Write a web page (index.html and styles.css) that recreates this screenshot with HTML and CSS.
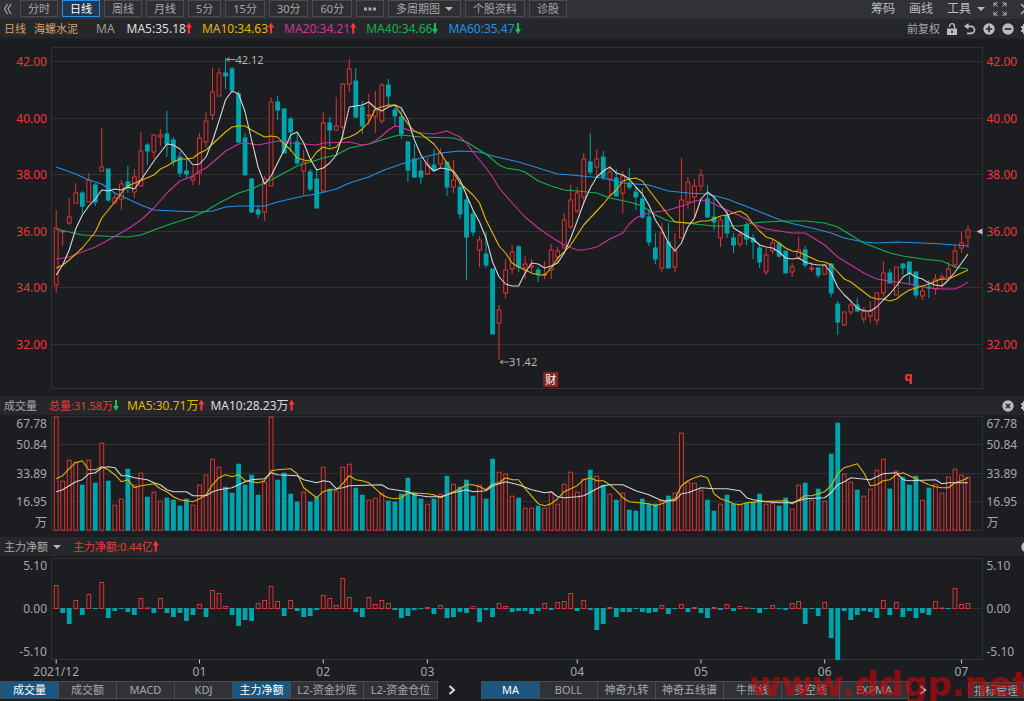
FILE: index.html
```html
<!DOCTYPE html>
<html lang="zh-CN">
<head>
<meta charset="utf-8">
<meta name="viewport" content="width=device-width, initial-scale=1">
<title>海螺水泥 日线</title>
<link rel="stylesheet" href="styles.css">
</head>
<body>
<main class="terminal">
  <nav class="toolbar" aria-label="周期">
    <button class="collapse" aria-label="收起"><svg width="9" height="12" viewBox="0 0 9 12"><path d="M4.5 1 1.5 6l3 5M8 1 5 6l3 5" fill="none" stroke="currentColor" stroke-width="1.2"/></svg></button>
    <div class="periods">
      <button class="period">分时</button>
      <button class="period active">日线</button>
      <button class="period">周线</button>
      <button class="period">月线</button>
      <button class="period">5分</button>
      <button class="period">15分</button>
      <button class="period">30分</button>
      <button class="period">60分</button>
      <button class="period" aria-label="更多"><svg width="12" height="4" viewBox="0 0 12 4"><path d="M0 .5h3v3H0zM4.500.5h3v3h-3zM9 .5h3v3H9z" fill="currentColor"/></svg></button>
      <button class="period">多周期图<i class="caret"></i></button>
      <button class="period">个股资料</button>
      <button class="period">诊股</button>
    </div>
    <div class="tools">
      <button class="tool">筹码</button>
      <button class="tool">画线</button>
      <button class="tool menu">工具<i class="caret"></i></button>
      <button class="tool" aria-label="全屏"><svg width="14" height="14" viewBox="0 0 14 14"><path d="M1 4.500V1h3.500M1 1l3.500 3.500M9.500 1H13v3.500M13 1 9.500 4.500M1 9.500V13h3.500M1 13l3.500-3.500M13 9.500V13H9.500M13 13 9.500 9.500" fill="none" stroke="currentColor"/></svg></button>
      <button class="tool edge" aria-label="关闭"><svg width="3" height="12" viewBox="0 0 3 12"><path d="M0 1l5 5-5 5" fill="none" stroke="currentColor" stroke-width="1.500"/></svg></button>
    </div>
  </nav>

  <header class="infobar">
    <span class="stock">日线</span>
    <span class="stock name">海螺水泥</span>
    <span class="ma label">MA</span>
    <span class="ma white">MA5:35.18<b class="up"></b></span>
    <span class="ma yellow">MA10:34.63<b class="up"></b></span>
    <span class="ma magenta">MA20:34.21<b class="up"></b></span>
    <span class="ma green">MA40:34.66<b class="down"></b></span>
    <span class="ma blue">MA60:35.47<b class="down green-arrow"></b></span>
    <div class="infotools">
      <button class="tool small">前复权</button>
      <button class="tool" aria-label="锁定"><svg width="10" height="12" viewBox="0 0 10 12"><path d="M2.500 4V3a2.500 2.300 0 0 1 5 0v2.500" fill="none" stroke="currentColor" stroke-width="1.300"/><path d="M0 5.500h10V12H0zM4.200 7.500v2.500h1.600V7.500z" fill="currentColor" fill-rule="evenodd"/></svg></button>
      <button class="tool" aria-label="撤销"><svg width="12" height="12" viewBox="0 0 12 12"><path d="M2 3.300h5a3.400 3.400 0 0 1 0 7H3" fill="none" stroke="currentColor" stroke-width="1.700"/><path d="M0 3.300 4.500 0v6.600z" fill="currentColor"/></svg></button>
      <button class="tool" aria-label="放大"><svg width="12" height="12" viewBox="0 0 12 12"><circle cx="6" cy="6" r="5.700" fill="currentColor"/><path d="M2.800 6h6.400M6 2.800v6.400" stroke="#27282b" stroke-width="1.700"/></svg></button>
      <button class="tool" aria-label="缩小"><svg width="12" height="12" viewBox="0 0 12 12"><circle cx="6" cy="6" r="5.700" fill="currentColor"/><path d="M2.800 6h6.400" stroke="#27282b" stroke-width="1.700"/></svg></button>
      <button class="tool edge" aria-label="设置"><svg width="3" height="12" viewBox="0 0 3 12"><path d="M3 1H2v2H0v2h1v2H0v2h2v2h1z" fill="currentColor"/></svg></button>
    </div>
  </header>

  <section class="pane price"><svg id="price" role="img" aria-label="K线图"></svg></section>

  <header class="panebar">
    <span class="title">成交量</span>
    <span class="red">总量:31.58万<b class="down"></b></span>
    <span class="ma yellow">MA5:30.71万<b class="up"></b></span>
    <span class="ma white">MA10:28.23万<b class="up"></b></span>
    <div class="infotools">
      <button class="tool" aria-label="关闭成交量"><svg width="12" height="12" viewBox="0 0 12 12"><circle cx="6" cy="6" r="5.700" fill="currentColor"/><path d="m3.800 3.800 4.400 4.400M8.200 3.800 3.800 8.200" stroke="#27282b" stroke-width="1.600"/></svg></button>
      <button class="tool edge" aria-label="设置成交量"><svg width="3" height="12" viewBox="0 0 3 12"><path d="M3 1H2v2H0v2h1v2H0v2h2v2h1z" fill="currentColor"/></svg></button>
    </div>
  </header>
  <section class="pane volume"><svg id="volume" role="img" aria-label="成交量图"></svg></section>

  <header class="panebar">
    <button class="title">主力净额<i class="caret"></i></button>
    <span class="red">主力净额:0.44亿<b class="up"></b></span>
    <div class="infotools">
      <button class="tool edge" aria-label="关闭主力净额"><svg width="3" height="12" viewBox="0 0 3 12"><circle cx="6" cy="6" r="5.700" fill="currentColor"/></svg></button>
    </div>
  </header>
  <section class="pane flow"><svg id="flow" role="img" aria-label="主力净额图"></svg></section>

  <footer class="indicators">
    <div class="tabs">
      <button class="tab active">成交量</button>
      <button class="tab">成交额</button>
      <button class="tab">MACD</button>
      <button class="tab">KDJ</button>
      <button class="tab active">主力净额</button>
      <button class="tab wide">L2-资金抄底</button>
      <button class="tab wide">L2-资金仓位</button>
    </div>
    <button class="next" aria-label="更多副图指标"><svg width="8" height="10" viewBox="0 0 8 10"><path d="m1.500 1 4.500 4-4.500 4" fill="none" stroke="currentColor" stroke-width="2"/></svg></button>
    <div class="tabs">
      <button class="tab active">MA</button>
      <button class="tab">BOLL</button>
      <button class="tab">神奇九转</button>
      <button class="tab mid">神奇五线谱</button>
      <button class="tab">牛熊线</button>
      <button class="tab">多空线</button>
      <button class="tab mid">EXPMA</button>
    </div>
    <button class="next" aria-label="更多主图指标"><svg width="8" height="10" viewBox="0 0 8 10"><path d="m1.500 1 4.500 4-4.500 4" fill="none" stroke="currentColor" stroke-width="2"/></svg></button>
    <button class="tab manage">指标管理</button>
    <div class="watermark">www.ddgp.net</div>
  </footer>
</main>
<script src="chart.js"></script>
</body>
</html>
```

FILE: styles.css
```css
* { box-sizing: border-box; }

body {
  margin: 0;
  background: #1c1d20;
  color: #a6a7a9;
  font-family: "Noto Sans", "Noto Sans CJK SC", sans-serif;
  font-size: 11px;
  line-height: 16px;
}

button {
  margin: 0;
  padding: 0;
  border: 0;
  background: none;
  color: inherit;
  font: inherit;
  white-space: nowrap;
  cursor: pointer;
}

svg { display: block; }

.terminal {
  display: flex;
  flex-direction: column;
  min-height: 100vh;
  overflow: hidden;
}

.toolbar {
  display: flex;
  align-items: center;
  height: 19px;
  padding: 0 0 2px 3px;
  background: #313236;
}

.collapse { width: 17px; }

.periods { display: flex; gap: 4px; }

.period {
  display: flex;
  align-items: center;
  height: 17px;
  padding: 0 7px;
  border: 1px solid #4a4b4f;
  background: #2e2f33;
}

.period.active {
  border-color: #1e90f0;
  background: #213a52;
  color: #fff;
}

.caret {
  width: 0;
  margin-left: 6px;
  border: 4px solid transparent;
  border-top-color: #b5b6b8;
  border-bottom-width: 0;
}
.period .caret { margin-left: 5px; }

.tools {
  display: flex;
  align-items: center;
  gap: 14px;
  margin-left: auto;
  font-size: 12px;
}

.tool { display: flex; align-items: center; color: #bbbcbe; }
.tool.small { font-size: 11px; color: #a6a7a9; }
.menu { margin-right: -6px; }

.infobar,
.panebar {
  display: flex;
  align-items: center;
  height: 19px;
  padding-left: 4px;
  background: #26272a;
  white-space: nowrap;
}

.infobar { gap: 10px; height: 20px; border-bottom: 1px solid #202124; }
.stock { color: #d9a066; }
.name { margin-left: -2px; }
.ma { font-size: 12px; }
.label { margin: 0 2px 0 8px; color: #98999b; }

.white { color: #dcdcdc; }
.yellow { color: #e0b800; }
.magenta { color: #d030a0; }
.green { color: #14b24c; }
.blue { color: #2090e8; }
.red { color: #e83a3a; }

/* Trend arrows: a 2px stem and a triangular head */
.up,
.down {
  display: inline-block;
  width: 6px;
  height: 11px;
  vertical-align: -1px;
  clip-path: polygon(50% 0, 100% 45%, 67% 45%, 67% 100%, 33% 100%, 33% 45%, 0 45%);
  background: #ff3535;
}
.down { transform: rotate(180deg); background: #10c850; }

.infotools {
  display: flex;
  align-items: center;
  gap: 7px;
  margin-left: auto;
}

.panebar { gap: 6px; }
.title { display: flex; align-items: center; }
.title + .red { margin: 0 2px 0 6px; }
.title .caret { margin-left: 5px; }

.pane { position: relative; min-height: 0; }
.pane svg { position: absolute; width: 100%; height: 100%; }
.price { flex: 357 0 357px; }
.volume { flex: 122 0 122px; }
.flow { flex: 124 0 124px; }

.axis { fill: #a6a7a9; font-size: 12px; }
.axis.hot { fill: #ef3737; }
.note { fill: #b4b4b4; font-size: 11px; }
.badge { fill: #fff; font-size: 11px; }
.quarter { fill: #ff3434; font-size: 13px; font-weight: 700; }

.indicators {
  position: relative;
  display: flex;
  align-items: center;
  height: 21px;
  padding-bottom: 1px;
}

.tabs { display: flex; border: 1px solid #4a4b4f; }

.tab {
  width: 58px;
  height: 16px;
  border-right: 1px solid #4a4b4f;
  background: #313236;
  text-align: center;
}
.tab:last-child { border-right: 0; }
.tab.wide { width: 73px; }
.tab.mid { width: 68px; }
.tab.active { background: #1a5680; color: #fff; }

.next { margin: 0 25px 0 10px; color: #d8d8d8; }

.tab.manage {
  width: 56px;
  margin-left: auto;
  border: 1px solid #4a4b4f;
}

.watermark {
  position: absolute;
  right: -4px;
  bottom: 0;
  color: rgba(205, 5, 10, 0.6);
  font: 700 34px/34px "DejaVu Sans", sans-serif;
  pointer-events: none;
}
```

FILE: chart.js
```javascript
// Each candle: direction (r rise, g fall), high, body top, body bottom, low.
// Levels count downwards; LEVEL_42 is the level of 42.00, two yuan take 56.5.
const candles = `r210,228,285,293 r230,231,232,246 r198,217,223,225 r183,193,203,203 g191,193,206,213 r173,180,202,202
g183,185,202,206 r128,167,171,171 g169,169,200,202 r192,198,203,203 r180,184,199,210 g166,182,188,193 r169,177,192,198
r132,151,186,186 g143,145,151,165 r134,135,152,159 r129,135,137,146 g111,134,144,157 g137,140,161,166 g152,157,173,177
g160,171,174,178 r167,177,180,185 r133,138,173,185 r112,121,142,147 r68,92,115,120 r68,73,96,96 g58,73,76,89
g67,69,90,93 g91,94,142,143 g133,138,175,175 g178,179,212,213 g206,210,214,218 r176,179,212,221 r97,102,186,186
g96,102,110,120 g108,109,153,153 g117,119,132,152 g133,142,163,165 r150,162,171,195 g169,172,189,191 g170,179,208,208
r112,123,191,192 g117,123,130,147 r97,126,130,131 r83,84,127,138 r59,69,84,92 g68,81,117,118 g101,107,126,134
r94,115,116,125 r91,110,116,133 r83,85,121,124 g79,85,96,107 g107,110,116,126 g109,117,134,139 g141,142,170,182
g144,159,177,178 g160,171,177,184 r158,164,174,175 g149,165,170,172 r148,153,164,168 g162,162,187,196 r160,180,187,193
g182,187,214,219 g195,200,237,280 g210,214,232,236 r236,240,250,267 g232,254,265,268 g269,269,334,334 r305,310,323,360
r259,270,293,298 r245,252,269,274 g245,247,267,272 r256,264,268,279 r259,266,267,272 g267,270,274,282 r261,274,275,279
r244,250,270,279 r247,251,257,263 r213,220,248,248 r185,200,227,229 r187,193,211,213 r153,159,197,203 g133,162,172,175
r149,159,167,177 g151,157,177,180 r168,172,179,196 g169,178,196,196 r171,176,193,213 g168,183,187,190 g187,192,197,210
g188,199,217,219 g209,217,242,246 g233,248,259,264 r223,233,268,272 g223,242,268,268 r233,251,267,272 r158,200,238,238
r177,182,202,209 r179,186,197,218 r169,175,186,191 g185,199,217,217 g197,217,222,230 r217,220,238,247 g210,215,233,238
g233,238,245,253 r232,235,244,247 g222,225,239,245 g234,238,242,259 g244,248,262,268 r248,255,272,275 r239,243,251,254
g242,244,256,258 g251,251,273,273 r263,267,272,277 r237,250,257,260 g246,250,265,268 r262,268,269,272 g267,268,275,278
r264,265,274,274 g263,264,293,297 g301,304,322,335 r312,312,325,326 r301,305,312,315 g298,305,311,312 r307,310,319,323
r301,311,316,323 r293,293,320,325 r261,273,293,297 g269,273,283,283 r267,267,295,295 g263,264,268,275 g262,262,273,285
g272,272,295,298 r287,291,296,300 g280,287,288,298 r274,279,289,295 r274,277,279,287 r262,269,277,278 r245,251,265,268
r232,243,248,253 r225,230,237,248`.split(/\s+/).map(s => [s[0], ...s.slice(1).split(',').map(Number)]);

const volumes = [114,50,71,69,46,71,48,88,50,26,32,62,46,58,34,39,30,33,31,25,32,26,46,56,72,64,44,38,67,46,56,36,49,114,51,58,37,29,39,29,34,64,42,40,64,67,43,36,31,33,38,30,29,37,53,38,32,27,32,37,55,47,44,51,35,46,32,72,59,57,35,33,23,23,25,23,39,27,47,59,39,52,61,55,46,37,31,38,21,20,32,27,27,31,35,38,98,49,48,41,31,20,27,36,27,27,28,29,37,27,28,25,33,22,46,48,31,42,30,77,108,57,49,41,35,42,61,72,42,60,54,46,55,31,43,47,38,54,62,56,54];

const flows = [23,-5,-16,8,-7,14,-1,26,-10,-3,-1,-4,-7,10,.5,-5,10,-5,-9,-5,-13,-7,4,-9,18,15,2,-7,-18,-12,-13,5,8,22,7,-8,8,-3,-9,-8,-2,13,10,3,30,11,-4,-9,11,4,8,5,-2,-10,-8,-2,-1,1,-6,3,-10,-9,-4,-5,2,-14,-2,-9,5,2,-4,-3,-3,-6,-3,5,-2,6,7,15,-3,8,-2,-22,-16,1,-9,-4,-4,-1,-4,-5,-4,3,-6,-1,4,-4,1,-5,-10,1,-2,4,-3,2,.5,-1,-5,-1,3,-1,-2,5,7,-16,-1,-8,6,-30,-52,-3,-12,-7,-3,-4,-10,8,-7,6,-9,-3,-10,-5,-7,7,.5,-1,20,4,5];

// Line nodes are "index:value" pairs; a bare value belongs to the next index.
const lines = s => {
  let i = -1;
  return s.trim().split(/\s+/).map(t => {
    const p = t.split(':');
    i = p.length > 1 ? +p[0] : i + 1;
    return [i, +p[p.length - 1]];
  });
};

const priceLines = [
  ['#2090e8', lines('167 3:174 5:180 7:184 9:193 11:199 13:205 15:210 18:211 22:212 24:211 26:207 28:206 32:206 34:202 38:196 40:194 43:189 45:183 48:177 50:171 53:164 56:158 59:153 62:151 65:152 67:156 69:159 71:162 74:168 77:174 79:175 84:178 87:183 91:185 94:191 97:193 100:194 103:199 107:209 110:217 112:222 116:228 119:233 121:238 124:242 126:243 129:242 133:243 136:244 138:245 140:246')],
  ['#14b24c', lines('229 2:232 4:235 7:236 11:237 13:235 15:230 18:223 21:217 23:211 25:203 28:193 30:189 33:180 35:173 37:166 39:162 41:158 43:155 45:148 48:144 50:140 52:136 53:135 56:137 61:138 63:142 64:146 66:154 68:165 69:168 71:170 72:172 74:181 76:186 78:190 80:191 83:193 85:198 88:202 90:206 92:215 94:221 98:224 101:226 105:226 107:223 109:222 112:221 115:221 118:223 120:227 122:235 124:243 126:248 128:253 130:256 133:259 136:261 138:267 140:269')],
  ['#d030a0', lines('259 2:257 4:252 6:247 8:240 11:229 13:220 15:208 17:193 19:181 21:176 22:171 23:168 25:157 26:151 28:144 29:143 31:145 34:141 36:143 38:144 40:145 41:143 45:142 47:145 48:144 49:141 50:136 51:130 52:126 53:127 54:130 56:133 58:134 60:131 62:137 63:143 64:152 66:168 67:177 68:188 70:203 72:217 74:228 76:237 78:245 80:250 81:250 83:247 85:239 87:233 88:224 89:218 90:215 91:213 94:210 95:208 97:204 98:201 99:200 100:201 102:207 104:213 106:219 107:224 109:229 113:233 115:233 116:237 118:245 120:257 122:265 124:273 126:279 128:281 132:285 134:288 136:289 138:289 139:286 140:282')],
  ['#e0b800', lines('268 265 260 4:248 6:232 218 210 202 193 186 15:175 169 166 162 159 159 158 153 150 144 138 132 127 126 126 130 32:137 136 137 144 150 158 160 161 152 147 149 147 139 137 134 129 122 109 107 105 105 115 124 131 134 139 144 153 163 173 183 189 195 203 220 233 246 253 263 267 270 273 275 275 268 258 252 245 235 225 84:204 196 190 181 179 178 181 190 93:207 215 222 97:223 223 221 221 219 216 215 213 211 215 224 231 237 239 243 248 251 252 255 258 261 262 265 272 279 282 287 292 297 299 299 301 299 294 290 288 286 284 281 279 279 276 273 270')],
  ['#d6d6d6', lines('275 265 250 229 215 206 199 190 191 189 190 187 189 180 15:161 17:144 145 149 157 165 164 157 141 121 100 91 94 112 140 167 184 176 35:150 135 132 143 159 170 168 163 155 135 107 106 105 102 108 111 107 105 108 120 140 155 165 171 168 169 171 180 195 210 222 238 262 277 284 286 286 273 263 264 268 266 263 253 238 221 203 188 177 171 167 173 175 179 187 194 205 220 230 243 251 243 227 218 199 192 197 205 213 228 232 236 239 245 247 248 252 258 259 258 262 264 265 265 273 287 295 301 308 311 311 307 300 294 286 277 273 277 279 283 285 286 280 272 263 254')]
];

const volumeLines = [
  ['#e0b800', lines('52 55 62 68 70 61 61 64 61 56 49 51 43 45 46 47 42 39 34 31 30 29 32 36 46 53 56 54 56 50 49 48 50 60 61 36:62 57 43 38 33 39 41 41 47 55 51 50 48 42 36 33 32 33 38 57:37 36 33 36 39 42 46 46 44 41 47 48 53 51 51 42 74:27 25 27 32 39 42 45 51 53 50 50 46 40 33 29 91:27 25 27 30 32 45 50 53 55 53 37 32 30 27 26 28 108:29 112:30 27 31 35 35 37 39 45 57 63 65 67 58 45 46 50 51 56 58 55 52 49 46 44 43 43 48 50 53')],
  ['#d6d6d6', lines('39 41 3:49 51 57 58 63 64 63 55 55 53 14:51 48 46 41 39 20:39 35 23:35 39 41 27:43 46 49 51 32:52 58 56 37:55 51 40:48 50 49 42 43 45 50:46 42 53:40 39 36 57:34 59:34 61:38 63:41 39 66:40 45 69:49 71:46 73:41 75:38 39 34 33 80:34 35 83:42 45 46 87:46 43 40 91:36 93:30 95:30 37 38 99:43 101:42 103:42 105:40 33 31 109:29 111:28 113:28 115:32 118:33 38 46 49 53 125:51 54 57 129:58 51 50 135:51 47 48 140:48')]
];

const RISE = '#dc3535', FALL = '#00a4ac', GRID = '#303134';
const LEFT = 51.5, RIGHT = 42, PAD_START = 4.7, PAD_END = 14.5;
const COUNT = candles.length;

function painter(id) {
  const svg = document.getElementById(id);
  svg.replaceChildren();
  const width = svg.clientWidth, height = svg.clientHeight, right = width - RIGHT + .5;
  const step = (right - LEFT - PAD_START - PAD_END) / (COUNT - 1);
  const add = (tag, attrs, text) => {
    const el = document.createElementNS('http://www.w3.org/2000/svg', tag);
    for (const k in attrs) el.setAttribute(k, attrs[k]);
    if (text) el.textContent = text;
    svg.append(el);
  };
  return {
    width, height, right, step, add,
    x: i => LEFT + PAD_START + i * step,
    text: (x, y, cls, text, anchor = 'start') => add('text', { x, y, class: cls, 'text-anchor': anchor }, text),
    rule: (x1, y1, x2, y2, stroke = GRID) => add('line', { x1, y1, x2, y2, stroke }),
    axis(y, label, hot) {
      const cls = hot ? 'axis hot' : 'axis';
      this.text(47, y + 4, cls, label, 'end');
      this.text(right + 4, y + 4, cls, label);
    },
    frame(top, bottom) {
      add('rect', { x: LEFT, y: top, width: right - LEFT, height: bottom - top, fill: 'none', stroke: GRID });
    },
    bar(i, top, bottom, rise, half) {
      const c = this.x(i), h = bottom - top;
      if (rise && h > 2) add('rect', { x: c - half + .5, y: top + .5, width: 2 * half - 1, height: h - 1, fill: '#1c1d20', stroke: RISE });
      else add('rect', { x: c - half, y: top, width: 2 * half, height: Math.max(1, h), fill: rise ? RISE : FALL });
    },
    line(color, nodes, y) {
      add('polyline', { points: nodes.map(([i, v]) => this.x(i).toFixed(1) + ',' + y(v).toFixed(1)).join(' '), fill: 'none', stroke: color, 'stroke-width': 1.1, 'stroke-linejoin': 'round' });
    }
  };
}

function drawPrice() {
  const p = painter('price'), k = p.height / 357, LEVEL_42 = 61.8;
  const y = v => (v - 39) * k;
  p.frame(8.5 * k, 349.5 * k);
  for (let n = 0; n < 6; n++) {
    const level = Math.floor(y(LEVEL_42 + n * 56.5)) + .5;
    p.rule(LEFT, level, p.right, level);
    p.axis(level, (42 - 2 * n).toFixed(2), true);
  }
  candles.forEach(([dir, high, top, bottom, low], i) => {
    const color = dir === 'r' ? RISE : FALL;
    p.rule(p.x(i), y(high), p.x(i), y(low), color);
    p.bar(i, y(top) - .5, y(bottom) + .5, dir === 'r', 2.4);
  });
  priceLines.forEach(([color, nodes]) => p.line(color, nodes, y));

  const arrow = (x, level) => p.add('path', { d: `M${x + 9} ${level}H${x}m3-2-3 2 3 2`, fill: 'none', stroke: '#a0a0a0' });
  arrow(p.x(26) + 1, y(59.5));
  p.text(p.x(26) + 10, y(59.5) + 4, 'note', '42.12');
  arrow(p.x(68) + 1, y(362));
  p.text(p.x(68) + 10, y(362) + 4, 'note', '31.42');
  p.add('rect', { x: p.x(76) - 8, y: y(379) - 7, width: 15, height: 15, rx: 1, fill: '#842626' });
  p.text(p.x(76) - .5, y(379) + 4.5, 'badge', '财', 'middle');
  p.text(p.x(131) - 1, y(381), 'quarter', 'q', 'middle');
  p.add('path', { d: `M${p.right - 6} ${y(231.5)}l6-3v6z`, fill: '#c0c0c0' });
}

function drawVolume() {
  const p = painter('volume'), k = p.height / 122, base = 115.7 * k;
  const y = h => base - h * k;
  p.frame(1.5 * k, 115.5 * k);
  [86.3, 57.3, 29.2].forEach(h => p.rule(LEFT, Math.floor(y(h)) + .5, p.right, Math.floor(y(h)) + .5));
  p.axis(9 * k, '67.78');
  p.axis(30 * k, '50.84');
  p.axis(59 * k, '33.89');
  p.axis(87 * k, '16.95');
  p.axis(108 * k, '万');
  volumes.forEach((v, i) => p.bar(i, y(v), base, candles[i][0] === 'r', 2.4));
  volumeLines.forEach(([color, nodes]) => p.line(color, nodes, y));
}

function drawFlow() {
  const p = painter('flow'), k = p.height / 124, zero = 52 * k, bottom = 103.5 * k;
  p.frame(2.5 * k, bottom);
  p.rule(LEFT, zero + .5, p.right, zero + .5);
  p.axis(10 * k, '5.10');
  p.axis(zero + 1, '0.00');
  p.axis(96 * k, '-5.10');
  flows.forEach((v, i) => v > 0
    ? p.bar(i, zero - v * k, zero + 1, true, 2.4)
    : p.bar(i, zero, zero - v * k, false, 2.4));
  [[0, '2021/12'], [22, '01'], [41, '02'], [57, '03'], [80, '04'], [99, '05'], [118, '06'], [139, '07']].forEach(([i, label]) => {
    p.rule(p.x(i), bottom, p.x(i), bottom + 4, '#c8c8c8');
    p.text(p.x(i), bottom + 16, 'axis', label, 'middle');
  });
}

function draw() {
  drawPrice();
  drawVolume();
  drawFlow();
}

draw();
addEventListener('resize', draw);
```
